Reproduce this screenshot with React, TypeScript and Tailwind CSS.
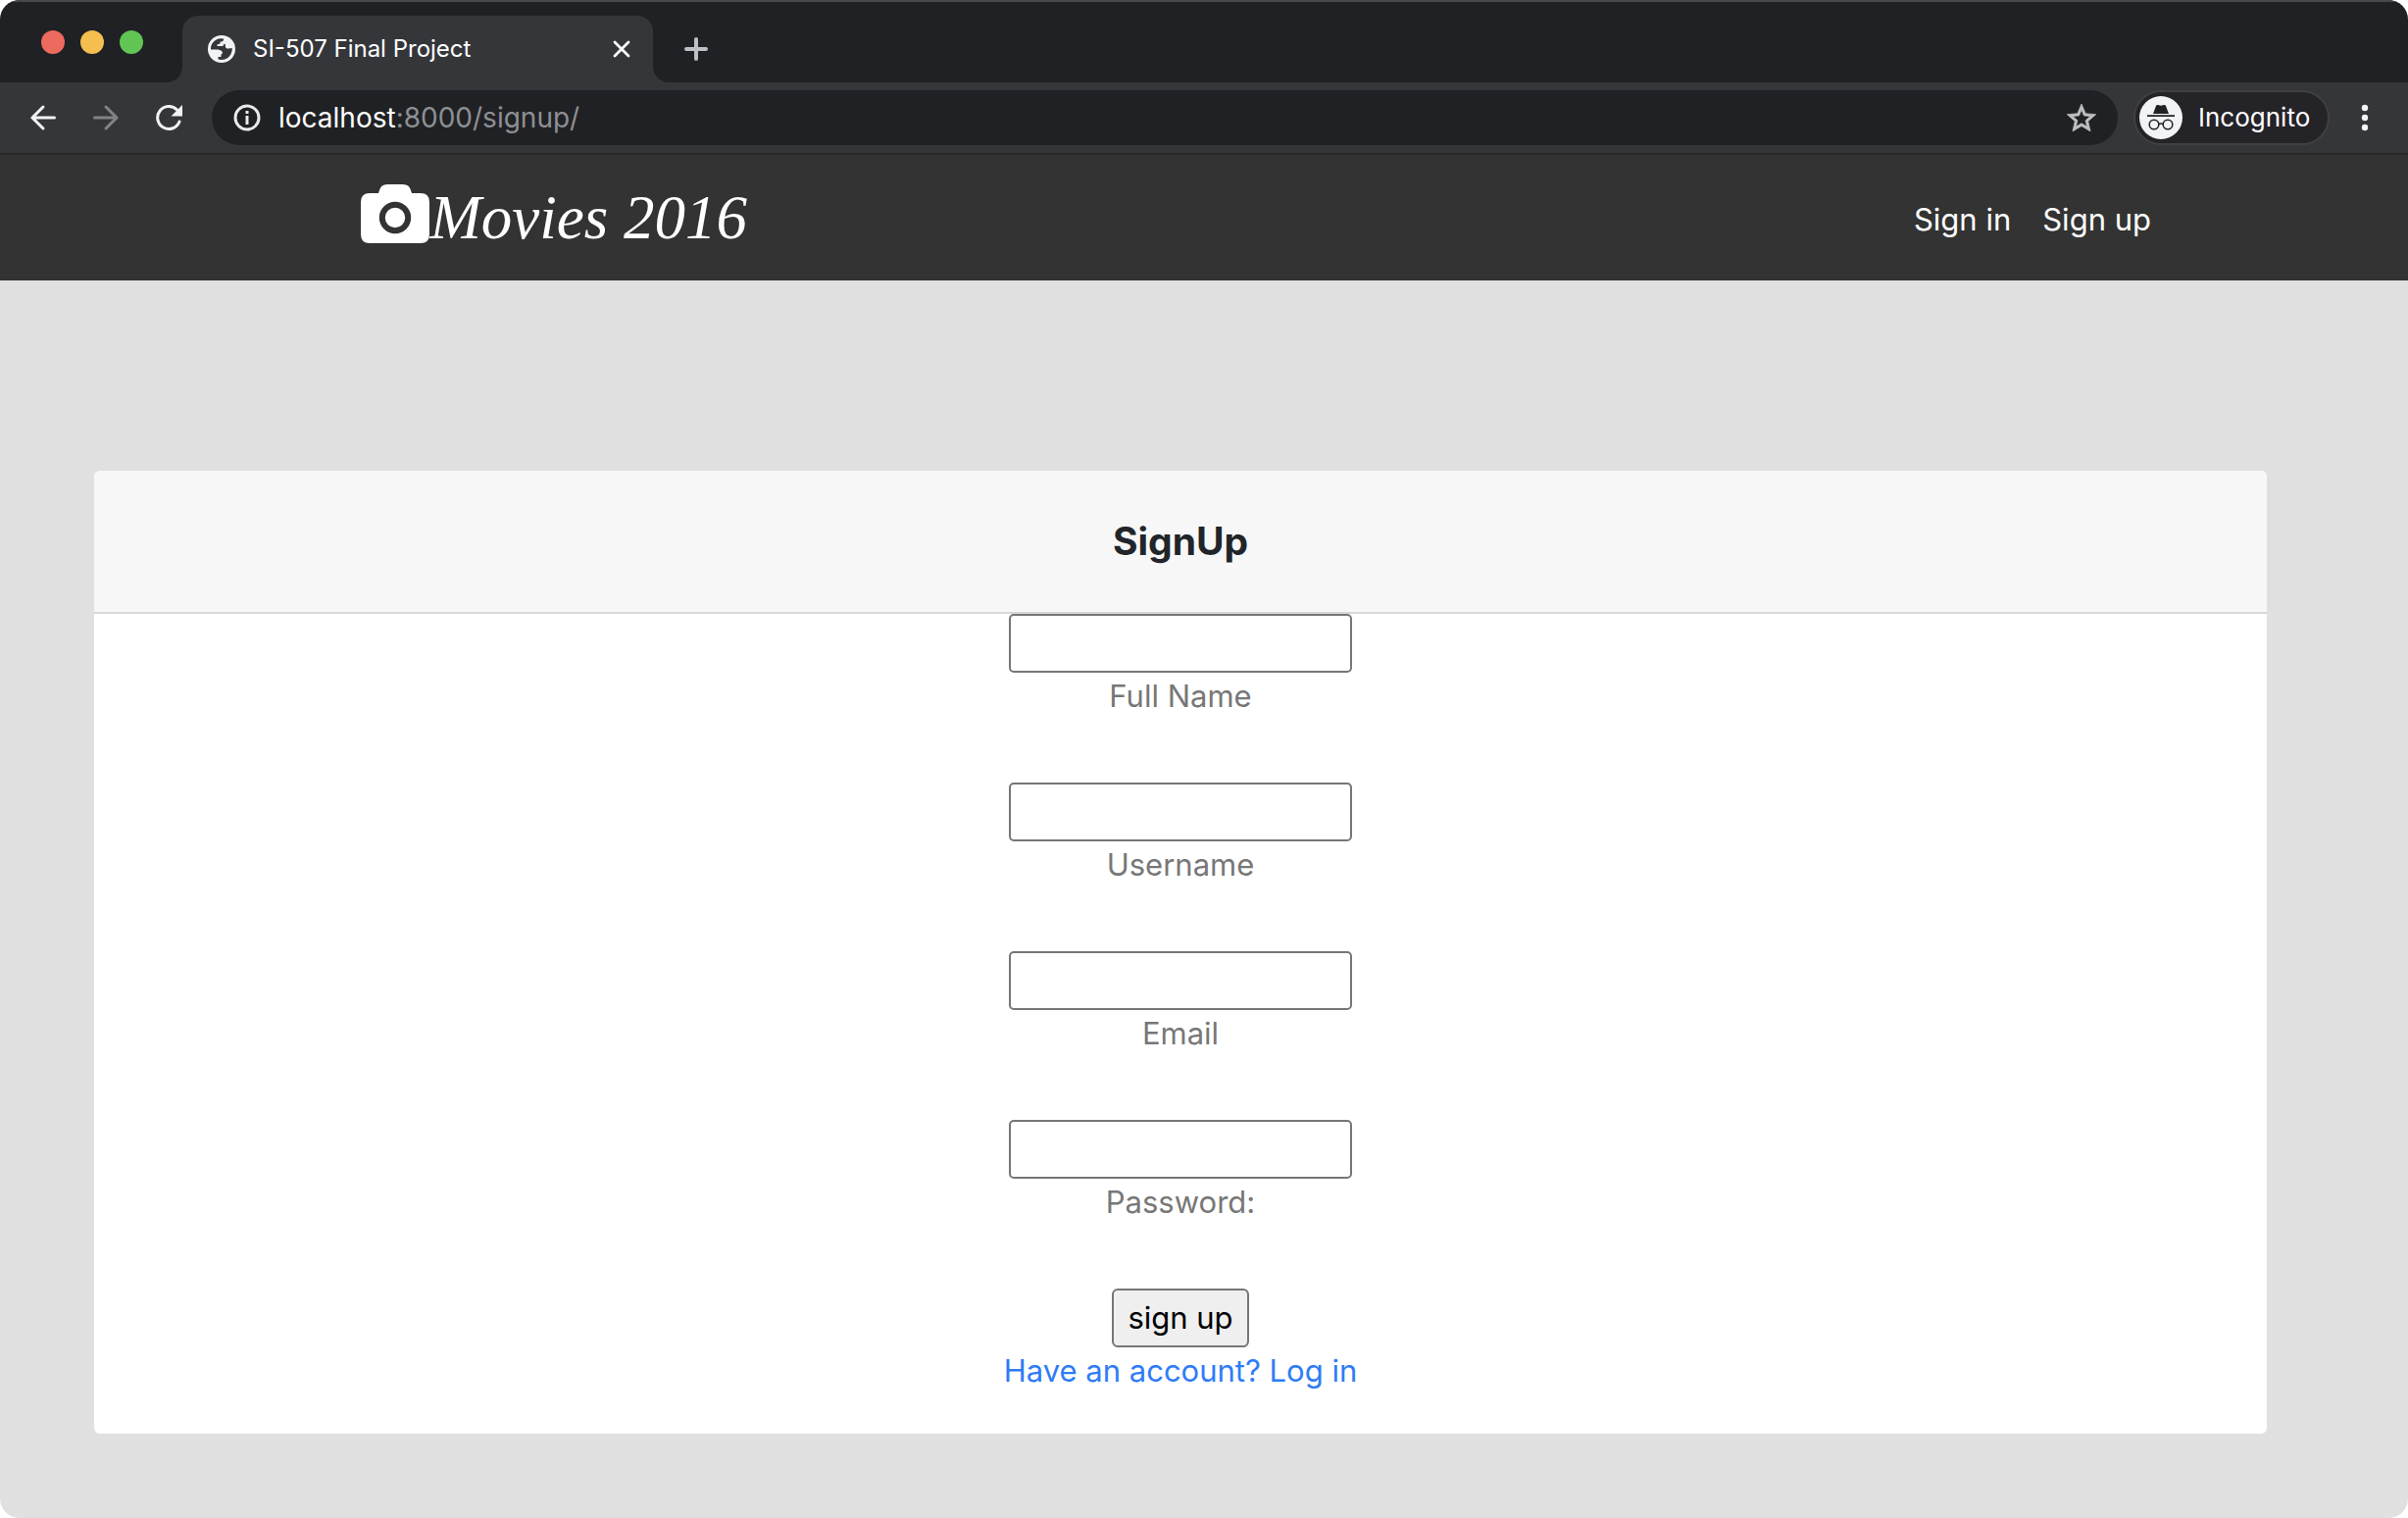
import React, { useId } from "react";

function TabCurve({ flip }: { flip?: boolean }) {
  return (
    <svg viewBox="0 0 16 16" className={`size-4 self-end ${flip ? "-scale-x-100" : ""}`} aria-hidden="true">
      <path d="M16 0v16H0A16 16 0 0 0 16 0Z" fill="#35363a" />
    </svg>
  );
}

function TabStrip() {
  return (
    <div className="flex h-[84px] border-t-2 border-[#47494c] bg-[#202124]">
      <div className="flex w-[170px] shrink-0 items-center gap-4 pl-[42px]">
        <button aria-label="Close window" className="size-6 rounded-full bg-[#ed6a5e]" />
        <button aria-label="Minimise window" className="size-6 rounded-full bg-[#f4bf4f]" />
        <button aria-label="Zoom window" className="size-6 rounded-full bg-[#61c554]" />
      </div>
      <TabCurve />
      <div className="mt-[14px] flex w-[480px] items-center rounded-t-2xl bg-[#35363a] pr-5 pl-[26px]">
        <svg viewBox="0 0 28 28" className="size-7 shrink-0" aria-hidden="true">
          <circle cx="14" cy="14" r="14" fill="#f1f3f4" />
          <path
            d="M3 13.500C3 8 7.500 3.400 13 3.200L16 3.500V5L14.500 6.500H12.500V8.500L9.500 9.500V11H14.500C16 11 16.500 9.500 16 8.500L18 9.500C17.500 12.500 18.500 14 21 13.500L24.800 13C25 19.500 20.500 25 14 25C12.500 25 11.500 24.800 10.500 24.500V22H13.500V19.500C15 19 15.500 17 14 16C12.500 15 11 14.500 9 14.500H3Z"
            fill="#35363a"
          />
        </svg>
        <span className="ml-[18px] flex-1 text-2xl text-white">SI-507 Final Project</span>
        <button aria-label="Close tab" className="flex size-6 items-center justify-center">
          <svg viewBox="0 0 18 18" className="size-[18px]" fill="none" stroke="#fff" strokeWidth="2.800" strokeLinecap="round">
            <path d="m2 2 14 14M16 2 2 16" />
          </svg>
        </button>
      </div>
      <TabCurve flip />
      <button aria-label="New tab" className="mt-[14px] ml-4 flex items-center">
        <svg viewBox="0 0 24 24" className="size-6" fill="none" stroke="#bdc1c6" strokeWidth="4" strokeLinecap="round">
          <path d="M12 2v20M2 12h20" />
        </svg>
      </button>
    </div>
  );
}

function Toolbar() {
  return (
    <div className="flex h-[74px] items-center border-b-2 border-[#282828] bg-[#35363a]">
      <button aria-label="Back" className="ml-[30px]">
        <svg viewBox="0 0 28 28" className="size-7" fill="none" stroke="#f1f3f4" strokeWidth="3" strokeLinecap="round">
          <path d="M25.500 14H3M14 3 3 14l11 11" />
        </svg>
      </button>
      <button aria-label="Forward" className="ml-9">
        <svg viewBox="0 0 28 28" className="size-7" fill="none" stroke="#818386" strokeWidth="3" strokeLinecap="round">
          <path d="M2.500 14H25M14 3l11 11-11 11" />
        </svg>
      </button>
      <button aria-label="Reload" className="ml-9">
        <svg viewBox="0 0 28 28" className="size-7">
          <path d="M25 18A11.500 11.500 0 1 1 22.500 6" fill="none" stroke="#f1f3f4" strokeWidth="3" strokeLinecap="round" />
          <path d="M28 1v11.500H16.500Z" fill="#f1f3f4" />
        </svg>
      </button>
      <div className="ml-[30px] flex h-14 flex-1 items-center rounded-full bg-[#202124] pr-[22px] pl-[22px]">
        <button aria-label="View site information">
          <svg viewBox="0 0 28 28" className="size-7">
            <circle cx="14" cy="14" r="12" fill="none" stroke="#e8eaed" strokeWidth="3" />
            <path d="M12.500 12h3v9h-3ZM12.500 7h3v3h-3Z" fill="#e8eaed" />
          </svg>
        </button>
        <div className="ml-[18px] flex-1 text-[28px] leading-9 text-[#8e9094]">
          <span className="text-white">localhost</span>:8000/signup/
        </div>
        <button aria-label="Bookmark this tab">
          <svg viewBox="2 2 20 19" className="h-7 w-[30px]">
            <path
              d="m22 9.240-7.190-.62L12 2 9.190 8.630 2 9.240l5.460 4.730L5.820 21 12 17.270 18.180 21l-1.630-7.030L22 9.240ZM12 15.400l-3.760 2.270 1-4.280-3.320-2.880 4.380-.38L12 6.100l1.710 4.040 4.380.38-3.320 2.880 1 4.280L12 15.400Z"
              fill="#bfbfc1"
              stroke="#bfbfc1"
              strokeWidth="0.500"
            />
          </svg>
        </button>
      </div>
      <button className="ml-4 flex h-14 w-[200px] items-center rounded-full border-2 border-[#3f4044] bg-[#242328] pl-1">
        <svg viewBox="0 0 44 44" className="size-11" aria-hidden="true">
          <circle cx="22" cy="22" r="22" fill="#f1f3f4" />
          <path d="M14 18 17 10q.5-1.500 2-1l3 .8 3-.8q1.500-.5 2 1l3 8ZM8 19.300h28v1.600H8Z" fill="#202124" />
          <g fill="none" stroke="#202124" strokeWidth="1.500">
            <circle cx="15" cy="29" r="4.800" />
            <circle cx="29" cy="29" r="4.800" />
            <path d="M19.800 28.500q2.200-1.200 4.400 0" />
          </g>
        </svg>
        <span className="ml-4 text-[26px] leading-8 text-white">Incognito</span>
      </button>
      <button aria-label="Browser menu" className="mr-[34px] ml-[26px]">
        <svg viewBox="0 0 20 28" className="h-7 w-5" fill="#f1f3f4">
          <circle cx="10" cy="4" r="3.200" />
          <circle cx="10" cy="14" r="3.200" />
          <circle cx="10" cy="24" r="3.200" />
        </svg>
      </button>
    </div>
  );
}

function SiteHeader() {
  return (
    <header className="flex h-32 items-center justify-between bg-[#333] pr-[262px] pl-[15%]">
      <a href="#" className="flex items-start text-white">
        <svg viewBox="0 0 70 60" className="h-[60px] w-[70px] shrink-0" aria-hidden="true">
          <path
            d="M9 9h9l1-3q1.500-6 8-6h16q6.500 0 8 6l1 3h9q9 0 9 9v33q0 9-9 9H9q-9 0-9-9V18q0-9 9-9Z"
            fill="#fff"
          />
          <circle cx="35" cy="34" r="13.200" fill="#fff" stroke="#333" strokeWidth="6" />
        </svg>
        <span className="font-['Apple_Chancery','URW_Chancery_L','Z003','Liberation_Serif',serif] text-[63px] leading-[68px] italic">
          Movies 2016
        </span>
      </a>
      <nav className="flex gap-8 pt-1 text-[31px] leading-[48px] text-white">
        <a href="#">Sign in</a>
        <a href="#">Sign up</a>
      </nav>
    </header>
  );
}

function Field({ label, type = "text" }: { label: string; type?: string }) {
  const id = useId();
  return (
    <div className="mb-16 flex flex-col items-center">
      <input id={id} type={type} className="h-[60px] w-[350px] rounded-[5px] border-2 border-[#767676] bg-white px-1" />
      <label htmlFor={id} className="text-[#777]">
        {label}
      </label>
    </div>
  );
}

function SignUpCard() {
  return (
    <form
      onSubmit={(e) => e.preventDefault()}
      className="flex flex-col overflow-hidden rounded-md bg-white pb-10 text-center text-[31px] leading-[48px]"
    >
      <h1 className="border-b-2 border-[#d8d8d8] bg-[#f7f7f7] py-12 text-[39px] font-bold text-[#212529]">SignUp</h1>
      <Field label="Full Name" />
      <Field label="Username" />
      <Field label="Email" type="email" />
      <Field label="Password:" type="password" />
      <div className="flex flex-col items-center">
        <button className="h-[60px] rounded-md border-2 border-[#767676] bg-[#efefef] px-[14px] text-black">sign up</button>
        <a href="#" className="text-[#2f7cf6]">
          Have an account? Log in
        </a>
      </div>
    </form>
  );
}

export default function App() {
  return (
    <div className="flex min-h-screen flex-col overflow-hidden rounded-[20px] bg-[#e0e0e0] font-['Inter',sans-serif]">
      <TabStrip />
      <Toolbar />
      <SiteHeader />
      <main className="pt-[194px] pr-36 pb-20 pl-24">
        <SignUpCard />
      </main>
    </div>
  );
}
